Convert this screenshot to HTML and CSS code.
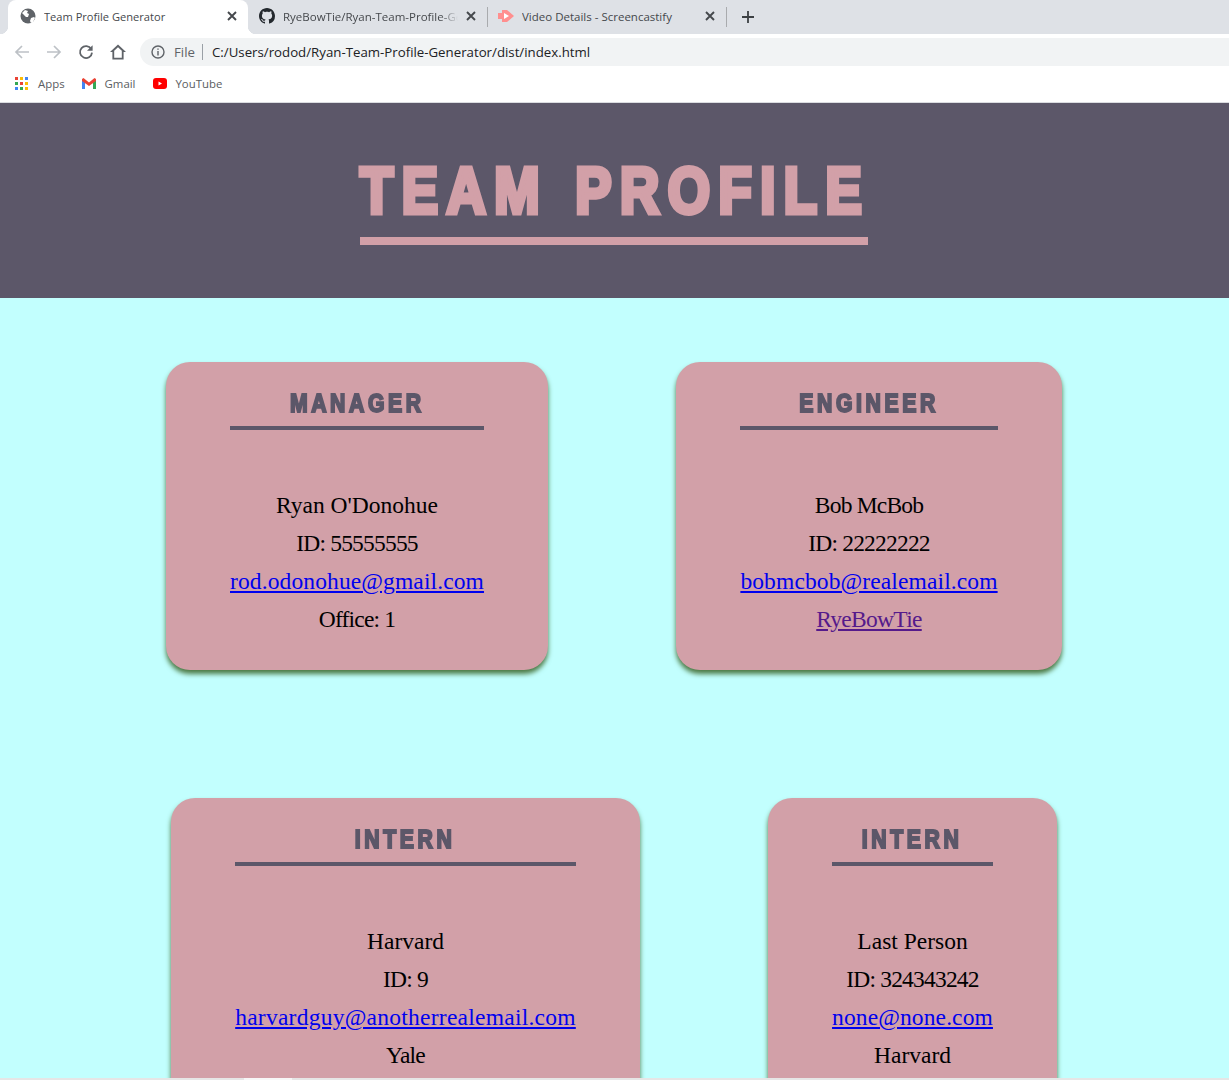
FILE: index.html
```html
<!DOCTYPE html>
<html lang="en">
<head>
    <meta charset="UTF-8">
    <title>Team Profile Generator</title>
    <link rel="stylesheet" href="styles.css">
</head>
<body>
    <div class="browser">
        <div class="tab-strip">
            <div class="tab tab-active">
                <svg class="tab-icon" viewBox="0 0 16 16"><circle cx="8" cy="8" r="7.5" fill="#5f6368"/><path d="M2 5l3-3 3 1-1 2 2 1-1 3H6L3 6zM10 13l1-3 3-1 1 1-2 4-2 1z" fill="#fff"/></svg>
                <span class="tab-title">Team Profile Generator</span>
                <svg class="tab-close" viewBox="0 0 10 10"><path d="M1 1l8 8M9 1l-8 8" stroke="#45484c" stroke-width="1.9"/></svg>
            </div>
            <div class="tab">
                <svg class="tab-icon" viewBox="0 0 16 16"><path fill="#24292e" d="M8 0C3.58 0 0 3.58 0 8c0 3.54 2.29 6.53 5.47 7.59.4.07.55-.17.55-.38 0-.19-.01-.82-.01-1.49-2.01.37-2.53-.49-2.69-.94-.09-.23-.48-.94-.82-1.13-.28-.15-.68-.52-.01-.53.63-.01 1.08.58 1.23.82.72 1.21 1.87.87 2.33.66.07-.52.28-.87.51-1.07-1.78-.2-3.64-.89-3.64-3.95 0-.87.31-1.59.82-2.15-.08-.2-.36-1.02.08-2.12 0 0 .67-.21 2.2.82.64-.18 1.32-.27 2-.27s1.36.09 2 .27c1.53-1.04 2.2-.82 2.2-.82.44 1.1.16 1.92.08 2.12.51.56.82 1.27.82 2.15 0 3.07-1.87 3.75-3.65 3.95.29.25.54.73.54 1.48 0 1.07-.01 1.93-.01 2.2 0 .21.15.46.55.38A8.01 8.01 0 0 0 16 8c0-4.42-3.58-8-8-8z"/></svg>
                <span class="tab-title tab-fade">RyeBowTie/Ryan-Team-Profile-Generator</span>
                <svg class="tab-close" viewBox="0 0 10 10"><path d="M1 1l8 8M9 1l-8 8" stroke="#45484c" stroke-width="1.9"/></svg>
            </div>
            <span class="tab-sep"></span>
            <div class="tab">
                <svg class="tab-icon" viewBox="0 0 16 16"><path d="M0 5h4v6H0z" fill="#ff8f8f"/><path d="M4 2h5l7 6-7 6H4z" fill="#ff8f8f"/><path d="M6 5l5 3-5 3z" fill="#fff"/></svg>
                <span class="tab-title">Video Details - Screencastify</span>
                <svg class="tab-close" viewBox="0 0 10 10"><path d="M1 1l8 8M9 1l-8 8" stroke="#45484c" stroke-width="1.9"/></svg>
            </div>
            <span class="tab-sep"></span>
            <svg class="new-tab" viewBox="0 0 12 12"><path d="M6 0v12M0 6h12" stroke="#3c4043" stroke-width="1.8"/></svg>
        </div>

        <div class="toolbar">
            <svg class="nav-icon" viewBox="0 0 16 16"><path d="M15 8H2M8 2L2 8l6 6" fill="none" stroke="#bdc1c6" stroke-width="1.7"/></svg>
            <svg class="nav-icon" viewBox="0 0 16 16"><path d="M1 8h13M8 2l6 6-6 6" fill="none" stroke="#bdc1c6" stroke-width="1.7"/></svg>
            <svg class="nav-icon" viewBox="0 0 16 16"><path d="M13.2 5A6 6 0 1 0 14 8.6" fill="none" stroke="#5f6368" stroke-width="1.8"/><path d="M14.6 1.2v5.6H9z" fill="#5f6368"/></svg>
            <svg class="nav-icon" viewBox="0 0 16 16"><path d="M8 .5L0 8h2.400v7.500h11.200V8H16zM4.200 13.800V6.800L8 3.200l3.800 3.600v7z" fill="#5f6368"/></svg>
            <div class="omnibox">
                <svg class="info-icon" viewBox="0 0 14 14"><circle cx="7" cy="7" r="6" fill="none" stroke="#5f6368" stroke-width="1.4"/><path d="M6.300 6h1.400v4.400H6.300zM6.300 3.400h1.400v1.400H6.300z" fill="#5f6368"/></svg>
                <span class="scheme">File</span>
                <span class="url">C:/Users/rodod/Ryan-Team-Profile-Generator/dist/index.html</span>
            </div>
        </div>

        <div class="bookmarks">
            <div class="bookmark">
                <svg class="apps-icon" viewBox="0 0 13 13">
                    <path fill="#ea4335" d="M0 0h3v3H0z"/><path fill="#fbbc04" d="M5 0h3v3H5z"/><path fill="#4285f4" d="M10 0h3v3h-3z"/>
                    <path fill="#34a853" d="M0 5h3v3H0z"/><path fill="#ea4335" d="M5 5h3v3H5z"/><path fill="#fbbc04" d="M10 5h3v3h-3z"/>
                    <path fill="#4285f4" d="M0 10h3v3H0z"/><path fill="#34a853" d="M5 10h3v3H5z"/><path fill="#fbbc04" d="M10 10h3v3h-3z"/>
                </svg>
                <span>Apps</span>
            </div>
            <div class="bookmark">
                <svg class="gmail-icon" viewBox="0 0 14 11">
                    <path fill="#4285f4" d="M0 1v10h3V4z"/><path fill="#34a853" d="M14 1v10h-3V4z"/>
                    <path fill="#ea4335" d="M0 1l1.500-1L7 4.500 12.500 0 14 1v2L7 8 0 3z"/>
                </svg>
                <span>Gmail</span>
            </div>
            <div class="bookmark">
                <svg class="yt-icon" viewBox="0 0 14 11"><rect width="14" height="11" rx="3" fill="#f00"/><path d="M5.500 3.500v4L9 5.500z" fill="#fff"/></svg>
                <span>YouTube</span>
            </div>
        </div>
    </div>

    <header class="page-header">
        <h1><span>TEAM PROFILE</span></h1>
    </header>

    <main class="team">
        <div class="card card-manager">
            <h2><span>MANAGER</span></h2>
            <p>Ryan O'Donohue</p>
            <p class="tight">ID: 55555555</p>
            <p><a href="#">rod.odonohue@gmail.com</a></p>
            <p class="tight">Office: 1</p>
        </div>
        <div class="card card-engineer">
            <h2><span>ENGINEER</span></h2>
            <p class="tight">Bob McBob</p>
            <p class="tight">ID: 22222222</p>
            <p><a href="#">bobmcbob@realemail.com</a></p>
            <p class="tight"><a class="visited" href="#">RyeBowTie</a></p>
        </div>
        <div class="card card-intern-wide">
            <h2><span>INTERN</span></h2>
            <p>Harvard</p>
            <p class="tight">ID: 9</p>
            <p><a class="long-link" href="#">harvardguy@anotherrealemail.com</a></p>
            <p class="tight">Yale</p>
        </div>
        <div class="card card-intern">
            <h2><span>INTERN</span></h2>
            <p>Last Person</p>
            <p class="tight">ID: 324343242</p>
            <p><a href="#">none@none.com</a></p>
            <p>Harvard</p>
        </div>
    </main>

    <div class="scrollbar"><span class="scrollbar-thumb"></span></div>
</body>
</html>
```

FILE: styles.css
```css
html, body {
    height: 1080px;
    overflow: hidden;
}

body {
    position: relative;
    margin: 0;
    background-color: #c2fffe;
    font-family: "Liberation Serif", serif;
}

.browser {
    font-family: "Open Sans", "Noto Sans", sans-serif;
    background-color: #fff;
    height: 103px;
    box-sizing: border-box;
    border-bottom: 1px solid #dadce0;
}

.tab-strip {
    display: flex;
    align-items: center;
    height: 34px;
    padding-left: 8px;
    background-color: #dee1e6;
}

.tab {
    display: flex;
    align-items: center;
    width: 239px;
    height: 34px;
    box-sizing: border-box;
    padding: 0 11px 2px;
    font-size: 11.5px;
    color: #45484c;
    flex: none;
}

.tab-active {
    position: relative;
    width: 240px;
    padding-left: 12px;
    font-size: 11.1px;
    background-color: #fff;
    border-radius: 8px 8px 0 0;
}

/* the small curves where the active tab meets the toolbar */
.tab-active::before,
.tab-active::after {
    content: "";
    position: absolute;
    bottom: 0;
    width: 8px;
    height: 8px;
}

.tab-active::before {
    left: -8px;
    background: radial-gradient(circle at 0 0, #dee1e6 8px, #fff 8.5px);
}

.tab-active::after {
    right: -8px;
    background: radial-gradient(circle at 100% 0, #dee1e6 8px, #fff 8.5px);
}

.tab-icon {
    width: 16px;
    height: 16px;
    flex: none;
    margin-right: 8px;
}

.tab-title {
    flex: 1;
    overflow: hidden;
    white-space: nowrap;
}

.tab-fade {
    -webkit-mask-image: linear-gradient(to right, #000 90%, transparent);
    mask-image: linear-gradient(to right, #000 90%, transparent);
}

.tab-close {
    width: 10px;
    height: 10px;
    flex: none;
    margin-left: 8px;
}

.tab-sep {
    width: 1px;
    height: 20px;
    margin-right: -1px;
    background-color: #a9abae;
    flex: none;
}

.new-tab {
    width: 12px;
    height: 12px;
    margin-left: 16px;
}

.toolbar {
    display: flex;
    align-items: center;
    height: 36px;
    padding-left: 14px;
}

.nav-icon {
    width: 16px;
    height: 16px;
    margin-right: 16px;
    flex: none;
}

.omnibox {
    display: flex;
    align-items: center;
    flex: 1;
    height: 28px;
    margin-left: -2px;
    padding-left: 11px;
    border-radius: 14px 0 0 14px;
    background-color: #f1f3f4;
    font-size: 13.25px;
    white-space: nowrap;
}

.info-icon {
    width: 14px;
    height: 14px;
    margin-right: 9px;
}

.scheme {
    color: #5f6368;
    padding-right: 7px;
    margin-right: 9px;
    border-right: 1px solid #9aa0a6;
    line-height: 16px;
}

.url {
    color: #202124;
}

.bookmarks {
    display: flex;
    align-items: center;
    height: 26px;
    padding-left: 15px;
    font-size: 11.4px;
    color: #5a5d61;
}

.bookmark {
    display: flex;
    align-items: center;
    margin-right: 17px;
}

.apps-icon {
    width: 13px;
    height: 13px;
    margin-right: 10px;
}

.gmail-icon {
    width: 14px;
    height: 11px;
    margin-right: 9px;
}

.yt-icon {
    width: 14px;
    height: 11px;
    margin-right: 9px;
}

.page-header {
    height: 195px;
    box-sizing: border-box;
    padding: 54px 1px 0 0;
    background-color: #5c5769;
    text-align: center;
}

/* no Impact here, so squeeze and thicken the bold sans to get near it */
.page-header h1 {
    display: inline-block;
    width: 508px;
    margin: 0;
    padding-bottom: 12px;
    border-bottom: 8px solid #d2a0a8;
    color: #d2a0a8;
    font-family: "Liberation Sans", sans-serif;
    font-size: 64px;
    line-height: 68px;
    font-weight: 700;
    text-align: left;
    letter-spacing: 10px;
    word-spacing: 4px;
    white-space: nowrap;
    -webkit-text-stroke: 5px #d2a0a8;
}

.page-header h1 span {
    display: block;
    transform: scaleX(0.85);
    transform-origin: left;
}

.team {
    display: flex;
    flex-wrap: wrap;
    justify-content: center;
    padding-right: 1px;
}

.card {
    flex: none;
    margin: 64px;
    padding: 26px 64px 32px;
    border-radius: 24px;
    background-color: #d2a0a8;
    box-shadow: 0 4px 5px #4c7a44;
    text-align: center;
    font-size: 23.5px;
}

.card-manager {
    width: 254px;
}

.card-engineer {
    width: 258px;
}

.card-intern-wide {
    width: 341px;
}

.card-intern {
    width: 161px;
}

.card h2 {
    margin: 0 0 56px;
    padding-bottom: 8px;
    border-bottom: 4px solid #5c5769;
    color: #5c5769;
    font-family: "Liberation Sans", sans-serif;
    font-size: 25px;
    line-height: 30px;
    font-weight: 700;
    letter-spacing: 4.2px;
    -webkit-text-stroke: 2px #5c5769;
}

.card h2 span {
    display: inline-block;
    transform: scaleX(0.85);
}

.card p {
    margin: 0;
    line-height: 38px;
    color: #000;
    white-space: nowrap;
}

.card p.tight {
    letter-spacing: -0.8px;
}

.card a {
    color: #0000ee;
    letter-spacing: 0.12px;
}

.card a.long-link {
    letter-spacing: 0.25px;
}

.card a.visited {
    color: #551a8b;
    letter-spacing: -0.7px;
}

.scrollbar {
    position: absolute;
    left: 0;
    right: 0;
    bottom: 0;
    height: 2px;
    background-color: #e6e6e6;
}

.scrollbar-thumb {
    display: block;
    width: 48px;
    height: 2px;
    margin-left: 244px;
    background-color: #f7f7f7;
}
```
